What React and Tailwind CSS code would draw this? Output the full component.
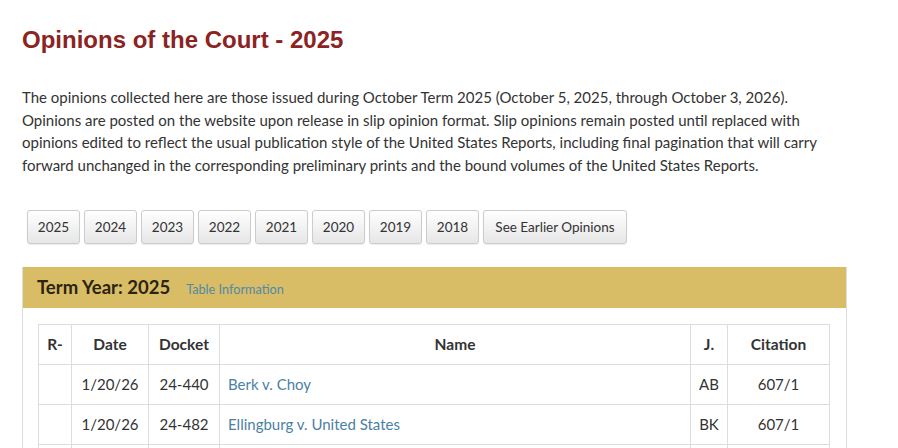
import React from "react";

const years = ["2025", "2024", "2023", "2022", "2021", "2020", "2019", "2018"];

const rows = [
  { r: "", date: "1/20/26", docket: "24-440", name: "Berk v. Choy", j: "AB", cite: "607/1" },
  { r: "", date: "1/20/26", docket: "24-482", name: "Ellingburg v. United States", j: "BK", cite: "607/1" },
  { r: "", date: "1/13/26", docket: "24-1260", name: "Bowe v. United States", j: "SS", cite: "" },
];

const td = "border border-[#dddddd] h-[40px] text-center";

export default function App() {
  return (
    <div className="w-[898px] h-[448px] overflow-hidden bg-white font-['Source_Sans_Pro','Lato',sans-serif] text-[#333333]">
      <div className="w-[825px] ml-[22px]">
        {/* title */}
        <h1 className="pt-[25px] text-[24px] leading-[30px] font-bold text-[#8b2323] font-['Liberation_Sans',Arial,sans-serif]">
          Opinions of the Court - 2025
        </h1>

        <p className="mt-[31px] text-[15px] leading-[22.7px] text-[#333333]">
          The opinions collected here are those issued during October Term 2025 (October 5, 2025, through October 3, 2026).
          Opinions are posted on the website upon release in slip opinion format. Slip opinions remain posted until replaced with
          opinions edited to reflect the usual publication style of the United States Reports, including final pagination that will carry
          forward unchanged in the corresponding preliminary prints and the bound volumes of the United States Reports.
        </p>

        {/* year buttons */}
        <div className="flex gap-[4px] ml-[5px] mt-[33px]">
          {years.map((y) => (
            <button
              key={y}
              className="h-[34px] w-[53px] rounded-[3px] border border-[#cccccc] bg-gradient-to-b from-white to-[#e6e6e6] text-[13.5px] text-[#333333] shadow-[0_1px_1px_rgba(0,0,0,0.08)]"
            >
              {y}
            </button>
          ))}
          <button className="h-[34px] w-[144px] rounded-[3px] border border-[#cccccc] bg-gradient-to-b from-white to-[#e6e6e6] text-[13.5px] text-[#333333] shadow-[0_1px_1px_rgba(0,0,0,0.08)]">
            See Earlier Opinions
          </button>
        </div>

        {/* panel */}
        <div className="mt-[23px] border border-[#dddddd] border-t-0">
          <div className="h-[41px] bg-[#d9bc66] flex items-center px-[14px] gap-[16px]">
            <span className="text-[18.5px] font-bold text-[#2b2410] mt-[2px]">Term Year: 2025</span>
            <a className="text-[12.7px] text-[#4f8aa6] mt-[4px]">Table Information</a>
          </div>
          <div className="px-[15px] pt-[16px] pb-[15px]">
            <table className="w-[792px] table-fixed border-collapse text-[15px]">
              <colgroup>
                <col className="w-[33px]" />
                <col className="w-[77px]" />
                <col className="w-[71px]" />
                <col className="w-[471px]" />
                <col className="w-[37px]" />
                <col />
              </colgroup>
              <thead>
                <tr className="font-bold text-[15.5px]">
                  <th className={td}>R-</th>
                  <th className={td}>Date</th>
                  <th className={td}>Docket</th>
                  <th className={td}>Name</th>
                  <th className={td}>J.</th>
                  <th className={td}>Citation</th>
                </tr>
              </thead>
              <tbody>
                {rows.map((r) => (
                  <tr key={r.docket}>
                    <td className={td}>{r.r}</td>
                    <td className={td}>{r.date}</td>
                    <td className={td}>{r.docket}</td>
                    <td className={td + " !text-left px-[8px] text-[#4a7fa6]"}>{r.name}</td>
                    <td className={td}>{r.j}</td>
                    <td className={td}>{r.cite}</td>
                  </tr>
                ))}
              </tbody>
            </table>
          </div>
        </div>
      </div>
    </div>
  );
}
